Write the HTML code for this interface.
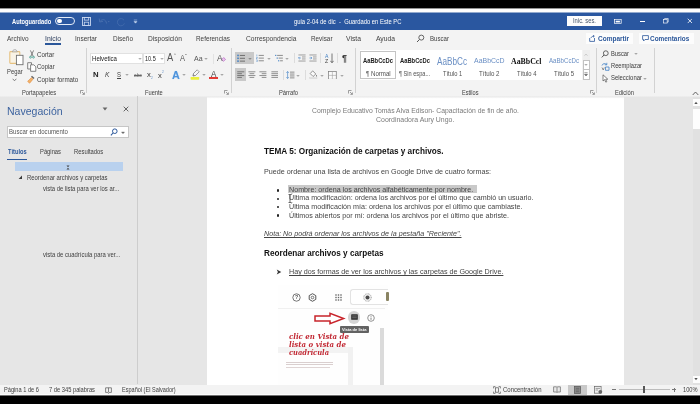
<!DOCTYPE html>
<html lang="es"><head><meta charset="utf-8"><title>guia 2-04 de dic - Word</title>
<style>
html,body{margin:0;padding:0;background:#000;}
#root{position:relative;width:700px;height:404px;overflow:hidden;background:#e6e6e6;font-family:"Liberation Sans",sans-serif;}
#root div,#root svg{position:absolute;}
.t{position:absolute;white-space:pre;transform-origin:0 50%;}
.sep{width:1px;background:#d2d2d2;}
.t{filter:blur(.3px);}
#root svg{filter:blur(.25px);}

</style></head>
<body>
<div id="root">
<!-- top black + white strip + title bar -->
<div style="left:0;top:0;width:700px;height:30px;background:linear-gradient(to bottom,#000 0,#000 7.8px,#fdfdfd 9px,#fdfdfd 11.8px,#2a57a0 13.2px,#2a57a0 30px)"></div>
<!-- autosave toggle -->
<div style="left:55.3px;top:16.9px;width:17.4px;height:6.6px;border:.9px solid #e4ecf8;border-radius:5px"></div>
<div style="left:57.4px;top:19px;width:4.2px;height:4.2px;border-radius:50%;background:#fff"></div>
<!-- save / undo / redo icons -->
<svg style="left:81.5px;top:17.2px" width="9" height="9" viewBox="0 0 9 9"><rect x=".5" y=".5" width="8" height="8" fill="none" stroke="#c9d8f0" stroke-width=".9"/><rect x="2.3" y=".5" width="4.4" height="2.6" fill="none" stroke="#c9d8f0" stroke-width=".8"/><rect x="2.3" y="5.2" width="4.4" height="3.3" fill="none" stroke="#c9d8f0" stroke-width=".8"/></svg>
<svg style="left:97.5px;top:17px" width="12" height="9" viewBox="0 0 12 9"><path d="M2 4.5 C4 1.5 8 2 8.5 6.5 M1.2 1.5 L1.7 5 L5 4.3 M10 4.6 H11.4" fill="none" stroke="#476eae" stroke-width="1"/></svg>
<svg style="left:116px;top:16.8px" width="10" height="10" viewBox="0 0 10 10"><path d="M8 3.2 A3.6 3.6 0 1 0 8.4 6.4" fill="none" stroke="#416aab" stroke-width="1"/></svg>
<svg style="left:132.5px;top:18.5px" width="5" height="5" viewBox="0 0 5 5"><path d="M.8 1 H4.2 M1 2.6 L2.5 4.2 L4 2.6Z" fill="#c9d8f0" stroke="#c9d8f0" stroke-width=".5"/></svg>
<!-- Inic ses button -->
<div style="left:567.4px;top:16.4px;width:34.2px;height:9.2px;background:#fdfdfd"></div>
<!-- window controls -->
<svg style="left:614.3px;top:18.6px" width="7.6" height="5" viewBox="0 0 9 7" preserveAspectRatio="none"><rect x=".5" y=".5" width="8" height="6" fill="none" stroke="#fff" stroke-width=".9"/><rect x="2" y="2.4" width="5" height="2.4" fill="#fff"/></svg>
<div style="left:639.5px;top:20.8px;width:5.4px;height:.9px;background:#fff"></div>
<svg style="left:662.8px;top:18.3px" width="5.8" height="5.6" viewBox="0 0 8 8"><rect x=".6" y="2" width="5.2" height="5.2" fill="none" stroke="#fff" stroke-width=".9"/><path d="M2.2 2 V.7 H7.3 V5.8 H5.8" fill="none" stroke="#fff" stroke-width=".9"/></svg>
<svg style="left:686.5px;top:18.3px" width="5.8" height="5.8" viewBox="0 0 8 8"><path d="M1 1 L7 7 M7 1 L1 7" stroke="#fff" stroke-width="1.1"/></svg>

<!-- tab row + ribbon -->
<div style="left:0;top:30px;width:700px;height:67.2px;background:linear-gradient(to bottom,#f3f3f3 0,#f3f3f3 65.8px,#e6e6e6 67.2px)"></div>
<div style="left:44.5px;top:43.4px;width:16px;height:1.3px;background:#2b579a"></div>
<svg style="left:415.5px;top:34px" width="9" height="9" viewBox="0 0 9 9"><circle cx="5.3" cy="3.6" r="2.5" fill="none" stroke="#555" stroke-width=".9"/><path d="M3.5 5.5 L1 8" stroke="#555" stroke-width="1"/></svg>
<!-- share / comments -->
<div style="left:586px;top:33px;width:47px;height:10.6px;background:#fcfcfc"></div>
<div style="left:639px;top:33px;width:55px;height:10.6px;background:#fcfcfc"></div>
<svg style="left:588.5px;top:34.5px" width="7" height="7" viewBox="0 0 7 7"><path d="M.7 3 V6.4 H5.5 V3 M2 2.8 C2.5 1.5 3.8 1.2 5 1.2 M4 .3 L5.3 1.2 L4 2.3" fill="none" stroke="#2b579a" stroke-width=".8"/></svg>
<svg style="left:642px;top:35px" width="7" height="7" viewBox="0 0 7 7"><path d="M.6 .6 H6.4 V4.5 H3 L1.6 6 V4.5 H.6Z" fill="none" stroke="#2b579a" stroke-width=".8"/></svg>

<!-- group separators -->
<div class="sep" style="left:86px;top:48px;height:45px"></div>
<div class="sep" style="left:231px;top:48px;height:45px"></div>
<div class="sep" style="left:354.5px;top:48px;height:45px"></div>
<div class="sep" style="left:596px;top:48px;height:45px"></div>
<div class="sep" style="left:654px;top:48px;height:45px"></div>

<!-- clipboard icons -->
<svg style="left:8.5px;top:49.3px" width="16" height="18" viewBox="0 0 16 18"><rect x=".8" y="2.6" width="10" height="11.8" rx=".8" fill="#f9f3e6" stroke="#e6c180" stroke-width="1.1"/><path d="M3.3 2.8 L4.6 .8 H7 L8.3 2.8Z" fill="#f7f7f7" stroke="#999" stroke-width=".7"/><rect x="7.4" y="6.3" width="6.6" height="9.4" fill="#fff" stroke="#707070" stroke-width=".9"/></svg>
<svg style="left:12px;top:78px" width="5" height="4" viewBox="0 0 5 4"><path d="M.7 .8 L2.5 2.8 L4.3 .8" fill="none" stroke="#666" stroke-width=".8"/></svg>
<svg style="left:27.8px;top:49.8px" width="8" height="9" viewBox="0 0 8 9"><path d="M2.4 .4 L5.2 6.4 M5.6 .4 L2.8 6.4" stroke="#666" stroke-width=".8" fill="none"/><circle cx="2.5" cy="7.2" r=".9" fill="none" stroke="#3b9c8a" stroke-width=".8"/><circle cx="5.5" cy="7.2" r=".9" fill="none" stroke="#3b9c8a" stroke-width=".8"/></svg>
<svg style="left:26.5px;top:62px" width="10" height="10" viewBox="0 0 10 10"><path d="M.7 .7 H4.5 V7 H.7Z" fill="#fafafa" stroke="#666" stroke-width=".8"/><path d="M3.6 2.8 H6.8 L8.8 4.8 V9.3 H3.6Z" fill="#fff" stroke="#666" stroke-width=".8"/></svg>
<svg style="left:27px;top:74.5px" width="9" height="10" viewBox="0 0 9 10"><path d="M5 .8 L7.5 3 L6.5 4 L4 1.8Z" fill="#666"/><path d="M4.3 2.7 L6 4.2 L2.6 8.2 L.6 6.4Z" fill="#f2b36a" stroke="#e08a3c" stroke-width=".6"/></svg>
<svg style="left:79.5px;top:89.8px" width="5" height="5" viewBox="0 0 5 5"><path d="M.5 3.5 V.5 H3.5" fill="none" stroke="#777" stroke-width=".7"/><path d="M2 2 L4.3 4.3 M4.4 2.4 V4.4 H2.4" fill="none" stroke="#777" stroke-width=".7"/></svg>
<!-- FONT group -->
<div style="left:90.8px;top:53.5px;width:51.6px;height:9.9px;background:#fff;outline:.5px solid #e1e1e1"></div>
<div style="left:144px;top:53.5px;width:20.3px;height:9.9px;background:#fff;outline:.5px solid #e1e1e1"></div>
<svg style="left:137.5px;top:57px" width="4" height="4" viewBox="0 0 4 4"><path d="M.8 1 L2 2.3 L3.2 1" fill="none" stroke="#666" stroke-width=".7"/></svg>
<svg style="left:159.5px;top:57px" width="4" height="4" viewBox="0 0 4 4"><path d="M.8 1 L2 2.3 L3.2 1" fill="none" stroke="#666" stroke-width=".7"/></svg>
<svg style="left:203.8px;top:56.6px" width="4" height="4" viewBox="0 0 4 4"><path d="M.8 1 L2 2.3 L3.2 1" fill="none" stroke="#666" stroke-width=".7"/></svg>
<div class="sep" style="left:213.3px;top:54px;height:10px;background:#e2e2e2"></div>
<!-- clear formatting eraser -->
<svg style="left:220.6px;top:57.4px" width="5" height="5" viewBox="0 0 6 6"><path d="M3.2 .6 L5.4 2.8 L3 5.2 L.8 3Z" fill="#e8c7ec" stroke="#b04cc0" stroke-width=".7"/></svg>
<!-- row2 arrows -->
<svg style="left:125.2px;top:72.8px" width="4" height="4" viewBox="0 0 4 4"><path d="M.8 1 L2 2.3 L3.2 1" fill="none" stroke="#666" stroke-width=".7"/></svg>
<svg style="left:182px;top:72.8px" width="4" height="4" viewBox="0 0 4 4"><path d="M.8 1 L2 2.3 L3.2 1" fill="none" stroke="#666" stroke-width=".7"/></svg>
<svg style="left:201.5px;top:72.8px" width="4" height="4" viewBox="0 0 4 4"><path d="M.8 1 L2 2.3 L3.2 1" fill="none" stroke="#666" stroke-width=".7"/></svg>
<svg style="left:220px;top:72.8px" width="4" height="4" viewBox="0 0 4 4"><path d="M.8 1 L2 2.3 L3.2 1" fill="none" stroke="#666" stroke-width=".7"/></svg>
<!-- highlighter pen -->
<svg style="left:190px;top:68.6px" width="11" height="11" viewBox="0 0 11 11"><path d="M7.2 .8 L9.2 2.8 L5 7 L3 5Z" fill="#f6f6f6" stroke="#777" stroke-width=".7"/><path d="M3 5 L5 7 L3.4 7.6 L2.4 6.6Z" fill="#888"/><rect x=".6" y="8" width="8.6" height="2.7" rx=".6" fill="#eaf03c"/></svg>
<!-- font colour bar -->
<div style="left:209.2px;top:76.8px;width:8.6px;height:2.2px;background:#e23a35"></div>
<svg style="left:224.3px;top:89.8px" width="5" height="5" viewBox="0 0 5 5"><path d="M.5 3.5 V.5 H3.5" fill="none" stroke="#777" stroke-width=".7"/><path d="M2 2 L4.3 4.3 M4.4 2.4 V4.4 H2.4" fill="none" stroke="#777" stroke-width=".7"/></svg>

<!-- PARAGRAPH group -->
<div style="left:235px;top:51.6px;width:18.6px;height:12.4px;background:#c9c9c9"></div>
<div style="left:235px;top:68.3px;width:11.4px;height:12.3px;background:#c9c9c9"></div>
<!-- bullets icon -->
<svg style="left:236.5px;top:53.6px" width="8.6" height="8.6" viewBox="0 0 10 10"><g fill="#3f7fc4"><rect x=".3" y=".8" width="1.8" height="1.8"/><rect x=".3" y="4.1" width="1.8" height="1.8"/><rect x=".3" y="7.4" width="1.8" height="1.8"/></g><path d="M3.3 1.7 H9.6 M3.3 5 H9.6 M3.3 8.3 H9.6" stroke="#555" stroke-width=".9"/></svg>
<svg style="left:247.5px;top:56.5px" width="4" height="4" viewBox="0 0 4 4"><path d="M.8 1 L2 2.3 L3.2 1" fill="none" stroke="#555" stroke-width=".7"/></svg>
<!-- numbering icon -->
<svg style="left:255.8px;top:53.8px" width="8.2" height="8.2" viewBox="0 0 10 10"><path d="M1 .6 V2.8 M.4 4 H1.6 V5 H.4 V6 H1.6 M.4 7.3 H1.6 V9.4 H.4" stroke="#3f7fc4" stroke-width=".6" fill="none"/><path d="M3.3 1.7 H9.6 M3.3 5 H9.6 M3.3 8.3 H9.6" stroke="#666" stroke-width=".9"/></svg>
<svg style="left:266.5px;top:56.5px" width="4" height="4" viewBox="0 0 4 4"><path d="M.8 1 L2 2.3 L3.2 1" fill="none" stroke="#666" stroke-width=".7"/></svg>
<!-- multilevel -->
<svg style="left:274.8px;top:53.8px" width="8.2" height="8.2" viewBox="0 0 10 10"><g fill="#3f7fc4"><rect x=".2" y="1" width="1.4" height="1.4"/><rect x="2" y="4.3" width="1.4" height="1.4"/><rect x="3.8" y="7.6" width="1.4" height="1.4"/></g><path d="M2.6 1.7 H9.6 M4.4 5 H9.6 M6.2 8.3 H9.6" stroke="#666" stroke-width=".9"/></svg>
<svg style="left:284.5px;top:56.5px" width="4" height="4" viewBox="0 0 4 4"><path d="M.8 1 L2 2.3 L3.2 1" fill="none" stroke="#666" stroke-width=".7"/></svg>
<div class="sep" style="left:293.5px;top:53px;height:10px;background:#dcdcdc"></div>
<!-- indents -->
<svg style="left:297.6px;top:54px" width="8" height="8" viewBox="0 0 10 10"><path d="M.5 1.2 H9.5 M5 3.7 H9.5 M5 6.2 H9.5 M.5 8.8 H9.5" stroke="#666" stroke-width=".75"/><path d="M3.6 5 H.8 M2 3.6 L.6 5 L2 6.4" stroke="#3f7fc4" stroke-width=".8" fill="none"/></svg>
<svg style="left:308.8px;top:54px" width="8" height="8" viewBox="0 0 10 10"><path d="M.5 1.2 H9.5 M5 3.7 H9.5 M5 6.2 H9.5 M.5 8.8 H9.5" stroke="#666" stroke-width=".75"/><path d="M.6 5 H3.4 M2.2 3.6 L3.6 5 L2.2 6.4" stroke="#3f7fc4" stroke-width=".8" fill="none"/></svg>
<div class="sep" style="left:320px;top:53px;height:10px;background:#dcdcdc"></div>
<!-- sort arrow -->
<svg style="left:329.6px;top:53px" width="4" height="11" viewBox="0 0 4 11"><path d="M2 .5 V9.5 M.4 7.8 L2 9.8 L3.6 7.8" stroke="#555" stroke-width=".8" fill="none"/></svg>
<div class="sep" style="left:337px;top:53px;height:10px;background:#dcdcdc"></div>
<!-- alignment -->
<svg style="left:237px;top:70.8px" width="7.8" height="7.4" viewBox="0 0 10 9"><path d="M.3 .8 H9.3 M.3 3.2 H6.3 M.3 5.6 H9.3 M.3 8 H6.3" stroke="#555" stroke-width=".9"/></svg>
<svg style="left:248.2px;top:70.8px" width="7.8" height="7.4" viewBox="0 0 10 9"><path d="M.5 .8 H9.5 M2 3.2 H8 M.5 5.6 H9.5 M2 8 H8" stroke="#666" stroke-width=".9"/></svg>
<svg style="left:259.3px;top:70.8px" width="7.8" height="7.4" viewBox="0 0 10 9"><path d="M.5 .8 H9.5 M3.5 3.2 H9.5 M.5 5.6 H9.5 M3.5 8 H9.5" stroke="#666" stroke-width=".9"/></svg>
<svg style="left:270.7px;top:70.8px" width="7.8" height="7.4" viewBox="0 0 10 9"><path d="M.5 .8 H9.5 M.5 3.2 H9.5 M.5 5.6 H9.5 M.5 8 H9.5" stroke="#666" stroke-width=".9"/></svg>
<div class="sep" style="left:283.4px;top:70px;height:10px;background:#dcdcdc"></div>
<!-- line spacing -->
<svg style="left:286.4px;top:70.5px" width="8.8" height="8" viewBox="0 0 11 10"><path d="M2 .8 V9.2 M.5 2.3 L2 .6 L3.5 2.3 M.5 7.7 L2 9.4 L3.5 7.7" stroke="#3f7fc4" stroke-width=".8" fill="none"/><path d="M5 1.4 H10.6 M5 3.8 H10.6 M5 6.2 H10.6 M5 8.6 H10.6" stroke="#666" stroke-width=".9"/></svg>
<svg style="left:296.4px;top:73.5px" width="4" height="4" viewBox="0 0 4 4"><path d="M.8 1 L2 2.3 L3.2 1" fill="none" stroke="#666" stroke-width=".7"/></svg>
<div class="sep" style="left:304.8px;top:70px;height:10px;background:#dcdcdc"></div>
<!-- shading bucket -->
<svg style="left:309px;top:70px" width="9.4" height="9.4" viewBox="0 0 11 11"><path d="M4.3 1 L8 4.7 L4.8 7.6 L1.4 4.2Z" fill="#fbfbfb" stroke="#666" stroke-width=".8"/><path d="M8.8 5.6 C9.6 6.8 9.8 7.4 8.9 7.8 C8 7.5 8.2 6.6 8.8 5.6Z" fill="#666"/><rect x=".8" y="8.8" width="8.6" height="1.9" fill="#dedede" stroke="#c9c9c9" stroke-width=".3"/></svg>
<svg style="left:320.3px;top:73.5px" width="4" height="4" viewBox="0 0 4 4"><path d="M.8 1 L2 2.3 L3.2 1" fill="none" stroke="#666" stroke-width=".7"/></svg>
<!-- borders -->
<svg style="left:328.2px;top:70.6px" width="8.8" height="8.8" viewBox="0 0 10 10"><rect x=".6" y=".6" width="8.8" height="8.8" fill="#fafafa" stroke="#777" stroke-width=".8"/><path d="M5 .6 V9.4 M.6 5 H9.4" stroke="#999" stroke-width=".6"/></svg>
<svg style="left:339.5px;top:73.5px" width="4" height="4" viewBox="0 0 4 4"><path d="M.8 1 L2 2.3 L3.2 1" fill="none" stroke="#666" stroke-width=".7"/></svg>
<svg style="left:348px;top:89.8px" width="5" height="5" viewBox="0 0 5 5"><path d="M.5 3.5 V.5 H3.5" fill="none" stroke="#777" stroke-width=".7"/><path d="M2 2 L4.3 4.3 M4.4 2.4 V4.4 H2.4" fill="none" stroke="#777" stroke-width=".7"/></svg>

<!-- STYLES gallery -->
<div style="left:359.6px;top:50px;width:222.2px;height:29.6px;background:#fff"></div>
<div style="left:359.8px;top:50.6px;width:36px;height:28.6px;border:1px solid #c4c4c4;box-sizing:border-box"></div>
<div style="left:582.8px;top:50px;width:6.8px;height:9.6px;background:#eeeeee"></div><div style="left:582.8px;top:60.4px;width:6.8px;height:19.2px;background:#fff;box-sizing:border-box;border:.6px solid #c2c2c2"></div>
<div style="left:582.8px;top:69.4px;width:6.8px;height:.8px;background:#c2c2c2"></div>
<svg style="left:584.2px;top:53.2px" width="4" height="4" viewBox="0 0 4 4"><path d="M.5 2.7 L2 1 L3.5 2.7" fill="none" stroke="#bbb" stroke-width=".7"/></svg>
<svg style="left:584.2px;top:63px" width="4" height="4" viewBox="0 0 4 4"><path d="M.8 1 L2 2.3 L3.2 1" fill="none" stroke="#666" stroke-width=".7"/></svg>
<svg style="left:584.2px;top:72.4px" width="4" height="5" viewBox="0 0 4 5"><path d="M.4 .7 H3.6 M.5 2.3 L2 4 L3.5 2.3Z" fill="#666" stroke="#666" stroke-width=".6"/></svg>
<svg style="left:589.5px;top:89.8px" width="5" height="5" viewBox="0 0 5 5"><path d="M.5 3.5 V.5 H3.5" fill="none" stroke="#777" stroke-width=".7"/><path d="M2 2 L4.3 4.3 M4.4 2.4 V4.4 H2.4" fill="none" stroke="#777" stroke-width=".7"/></svg>

<!-- EDIT group icons -->
<svg style="left:601px;top:50.3px" width="8" height="8" viewBox="0 0 8 8"><circle cx="4.8" cy="3.2" r="2.4" fill="none" stroke="#555" stroke-width=".9"/><path d="M3 5 L.8 7.4" stroke="#555" stroke-width="1"/></svg>
<svg style="left:633.5px;top:52.4px" width="4" height="4" viewBox="0 0 4 4"><path d="M.8 1 L2 2.3 L3.2 1" fill="none" stroke="#666" stroke-width=".7"/></svg>
<svg style="left:601px;top:62px" width="9" height="9" viewBox="0 0 9 9"><path d="M1 3.5 C1.5 1.5 4 1 5.5 2.5 M5.8 .8 V2.8 H3.8" fill="none" stroke="#3f7fc4" stroke-width=".8"/><path d="M4.5 5 H8 V8.3 H4.5Z" fill="none" stroke="#3f7fc4" stroke-width=".8"/><path d="M1 5.5 L2.2 8 L3.3 5.5" fill="none" stroke="#666" stroke-width=".7"/></svg>
<svg style="left:602px;top:74px" width="7" height="9" viewBox="0 0 7 9"><path d="M1 .8 V7 L2.6 5.6 L3.8 8.2 L4.8 7.7 L3.7 5.2 H5.8Z" fill="#fff" stroke="#555" stroke-width=".7"/></svg>
<svg style="left:643px;top:76.5px" width="4" height="4" viewBox="0 0 4 4"><path d="M.8 1 L2 2.3 L3.2 1" fill="none" stroke="#666" stroke-width=".7"/></svg>
<svg style="left:691.5px;top:91px" width="7" height="5" viewBox="0 0 7 5"><path d="M.7 4 L3.5 1 L6.3 4" fill="none" stroke="#555" stroke-width=".9"/></svg>

<!-- NAV PANE -->
<div style="left:137.3px;top:96.4px;width:.8px;height:288px;background:#cdcdcd"></div>
<svg style="left:102px;top:106.6px" width="6" height="4" viewBox="0 0 6 4"><path d="M.6 .6 H5.4 L3 3.4Z" fill="#666"/></svg>
<svg style="left:123px;top:105.6px" width="6" height="6" viewBox="0 0 6 6"><path d="M.7 .7 L5.3 5.3 M5.3 .7 L.7 5.3" stroke="#555" stroke-width=".9"/></svg>
<div style="left:7.4px;top:126px;width:121.6px;height:11.5px;background:#fff;box-sizing:border-box;border:.7px solid #c6c6c6"></div>
<svg style="left:110px;top:128px" width="8" height="8" viewBox="0 0 8 8"><circle cx="4.8" cy="3.2" r="2.3" fill="none" stroke="#2b579a" stroke-width="1"/><path d="M3 5 L.9 7.3" stroke="#2b579a" stroke-width="1.1"/></svg>
<svg style="left:121px;top:130.5px" width="4" height="4" viewBox="0 0 4 4"><path d="M.5 1 L2 2.7 L3.5 1Z" fill="#666" stroke="#666" stroke-width=".4"/></svg>
<div style="left:7.4px;top:158.6px;width:19.6px;height:1.4px;background:#2b579a"></div>
<div style="left:14.5px;top:162.4px;width:108.5px;height:8.9px;background:#b9d1ee"></div>
<svg style="left:66px;top:164.5px" width="4" height="5" viewBox="0 0 4 5"><path d="M.5 .5 H3.5 L2 2.3Z M.5 4.5 H3.5 L2 2.7Z" fill="#444"/></svg>
<svg style="left:17.8px;top:174.6px" width="4.6" height="4.6" viewBox="0 0 4 4"><path d="M3.5 .5 V3.5 H.5Z" fill="#3a3a3a"/></svg>
<!-- DOCUMENT PAGE -->
<div style="left:206.6px;top:96.8px;width:417.6px;height:288px;background:linear-gradient(to bottom,#ededed 0,#fff 1.6px)"></div>
<!-- highlight on bullet 1 -->
<div style="left:288.4px;top:185.2px;width:188.6px;height:7.7px;background:#c9c9c9"></div>
<!-- bullets -->
<div style="left:277.2px;top:189.4px;width:2.6px;height:2.6px;margin:-.3px;border-radius:50%;background:#222"></div>
<div style="left:277.2px;top:197.8px;width:2.6px;height:2.6px;margin:-.3px;border-radius:50%;background:#222"></div>
<div style="left:277.2px;top:206.2px;width:2.6px;height:2.6px;margin:-.3px;border-radius:50%;background:#222"></div>
<div style="left:277.2px;top:214.6px;width:2.6px;height:2.6px;margin:-.3px;border-radius:50%;background:#222"></div>
<!-- I-beam cursor -->
<svg style="left:287.5px;top:193.5px" width="4" height="9" viewBox="0 0 4 9"><path d="M.5 .5 H3.5 M2 .5 V8.5 M.5 8.5 H3.5" stroke="#333" stroke-width=".7" fill="none"/></svg>
<!-- arrow bullet -->
<svg style="left:275.8px;top:268.8px" width="6" height="6" viewBox="0 0 5 5"><path d="M.6 .5 L4.4 2.5 L.6 4.5 L1.6 2.5Z" fill="#333"/></svg>

<!-- embedded picture -->
<div style="left:278px;top:285px;width:112px;height:99.5px;background:#fefefe"></div>
<div style="left:278px;top:308.2px;width:107px;height:.8px;background:#f0f0f0"></div>
<svg style="left:291.6px;top:292.5px" width="9" height="9" viewBox="0 0 9 9"><circle cx="4.5" cy="4.5" r="3.7" fill="none" stroke="#555" stroke-width=".8"/></svg>
<svg style="left:307.7px;top:292.5px" width="9" height="9" viewBox="0 0 9 9"><path d="M4.5 .7 L7.8 2.6 V6.4 L4.5 8.3 L1.2 6.4 V2.6Z" fill="none" stroke="#555" stroke-width="1"/><circle cx="4.5" cy="4.5" r="1.3" fill="none" stroke="#555" stroke-width=".8"/></svg>
<svg style="left:334.5px;top:293.5px" width="7" height="7" viewBox="0 0 7 7"><g fill="#666"><rect x=".3" y=".3" width="1.4" height="1.4"/><rect x="2.8" y=".3" width="1.4" height="1.4"/><rect x="5.3" y=".3" width="1.4" height="1.4"/><rect x=".3" y="2.8" width="1.4" height="1.4"/><rect x="2.8" y="2.8" width="1.4" height="1.4"/><rect x="5.3" y="2.8" width="1.4" height="1.4"/><rect x=".3" y="5.3" width="1.4" height="1.4"/><rect x="2.8" y="5.3" width="1.4" height="1.4"/><rect x="5.3" y="5.3" width="1.4" height="1.4"/></g></svg>
<div style="left:350.4px;top:289.2px;width:45px;height:15.8px;border:.8px solid #e3e3e3;border-right:0;border-radius:3px 0 0 3px;box-sizing:border-box;background:#fff"></div>
<div style="left:388px;top:285px;width:8px;height:25px;background:#fff"></div>
<svg style="left:363px;top:293px" width="9" height="9" viewBox="0 0 9 9"><circle cx="4.5" cy="4.5" r="3.8" fill="#efefef" stroke="#777" stroke-width=".7" stroke-dasharray=".8 .7"/><circle cx="4.5" cy="4.4" r="2" fill="#4a4a4a"/></svg>
<div style="left:385.5px;top:292px;width:3px;height:9px;background:#8a8463;border-radius:1px"></div>
<!-- red outlined arrow -->
<svg style="left:314px;top:311.7px" width="34" height="13" viewBox="0 0 34 13"><path d="M1 3.9 H16 V1.4 L29.6 6.5 L16 11.6 V9.1 H1Z" fill="#fff" stroke="#c8242b" stroke-width="1.5" stroke-linejoin="miter"/></svg>
<!-- list view button -->
<div style="left:347.8px;top:311px;width:12.6px;height:12.6px;border-radius:50%;background:#d4d4d4"></div>
<svg style="left:350.8px;top:314.3px" width="7" height="6" viewBox="0 0 7 6"><rect x=".2" y=".2" width="6.6" height="5.6" rx=".6" fill="#2c2c2c"/><path d="M1.2 2 H5.8 M1.2 3.8 H5.8" stroke="#bbb" stroke-width=".5"/></svg>
<svg style="left:367.3px;top:313.7px" width="8" height="8" viewBox="0 0 8 8"><circle cx="4" cy="4" r="3.3" fill="none" stroke="#666" stroke-width=".7"/><path d="M4 3.6 V5.8 M4 2.2 V2.9" stroke="#666" stroke-width=".8"/></svg>
<!-- tooltip -->
<div style="left:339.8px;top:325.6px;width:29px;height:7.3px;background:#626262;border-radius:1px"></div>
<!-- faint shapes -->
<div style="left:380.3px;top:327.7px;width:4.2px;height:57px;background:#dadada"></div>
<div style="left:278px;top:346.5px;width:74px;height:6px;background:#f3f3f3"></div>
<div style="left:347.6px;top:347px;width:5.5px;height:37.5px;background:#f1f1f1"></div>
<div style="left:285.5px;top:361.8px;width:47px;height:1.1px;background:#dacfcf"></div>
<div style="left:285.5px;top:364.2px;width:47px;height:1.1px;background:#dacfcf"></div>
<div style="left:285.5px;top:366.6px;width:44px;height:1.1px;background:#dfd4d4"></div>

<!-- vertical scrollbar -->
<div style="left:692.5px;top:96.8px;width:7.5px;height:288px;background:#e1e1e1"></div>
<div style="left:692.8px;top:99px;width:7.2px;height:7px;background:#fdfdfd"></div>
<div style="left:692.8px;top:108.7px;width:7.2px;height:20.8px;background:#fdfdfd"></div>
<div style="left:692.8px;top:375.5px;width:7.2px;height:7px;background:#fdfdfd"></div>
<svg style="left:694px;top:100.5px" width="4" height="4" viewBox="0 0 4 4"><path d="M.3 3 L2 .8 L3.7 3Z" fill="#555"/></svg>
<svg style="left:693.5px;top:377px" width="4" height="4" viewBox="0 0 4 4"><path d="M.3 1 L2 3.2 L3.7 1Z" fill="#555"/></svg>

<!-- STATUS BAR -->
<div style="left:0;top:384.6px;width:700px;height:10.6px;background:#f3f3f3"></div>
<div style="left:0;top:394px;width:700px;height:10px;background:linear-gradient(to bottom,#fcfcfc 0,#fcfcfc 1px,#000 1.9px,#000 10px)"></div>
<svg style="left:104.5px;top:386.5px" width="7" height="7" viewBox="0 0 7 7"><path d="M.6 .8 H6.4 V5.4 H4.3 L3.5 6.4 L2.7 5.4 H.6Z M3.5 .8 V5.2" fill="none" stroke="#555" stroke-width=".7"/></svg>
<svg style="left:493px;top:386px" width="8" height="8" viewBox="0 0 8 8"><path d="M.6 2.4 V.6 H2.4 M5.6 .6 H7.4 V2.4 M7.4 5.6 V7.4 H5.6 M2.4 7.4 H.6 V5.6" fill="none" stroke="#555" stroke-width=".7"/><rect x="2.4" y="1.8" width="3.2" height="4.4" fill="none" stroke="#555" stroke-width=".7"/></svg>
<svg style="left:552.5px;top:386.3px" width="8" height="7" viewBox="0 0 8 7"><path d="M.6 .8 H3.6 L4 1.3 L4.4 .8 H7.4 V6 H4.4 L4 6.5 L3.6 6 H.6Z M4 1.3 V6.3" fill="#e9e9e9" stroke="#666" stroke-width=".7"/></svg>
<div style="left:568px;top:384.6px;width:19px;height:10.6px;background:#c9c9c9"></div>
<svg style="left:574.2px;top:386px" width="7" height="8" viewBox="0 0 7 8"><rect x=".5" y=".5" width="6" height="7" fill="#8a8a8a" stroke="#555" stroke-width=".7"/><path d="M1.8 2.3 H5.2 M1.8 4 H5.2 M1.8 5.7 H5.2" stroke="#555" stroke-width=".6"/></svg>
<svg style="left:594px;top:386px" width="9" height="8" viewBox="0 0 9 8"><rect x=".5" y=".6" width="6.6" height="6.6" fill="#eee" stroke="#666" stroke-width=".7"/><path d="M1.6 2.4 H6 M1.6 4 H4" stroke="#666" stroke-width=".6"/><circle cx="6.3" cy="5.8" r="1.9" fill="#666"/></svg>
<div style="left:611.5px;top:389.3px;width:4px;height:.8px;background:#777"></div>
<div style="left:619px;top:389.4px;width:51px;height:.7px;background:#bcbcbc"></div>
<div style="left:643px;top:386.2px;width:2px;height:7.2px;background:#555"></div>
<div style="left:672px;top:389.3px;width:4.4px;height:.8px;background:#777"></div>
<div style="left:673.8px;top:387.5px;width:.8px;height:4.4px;background:#777"></div>

<span id="t0" class="t" style="left:11.8px;top:17.50px;font:7px/8.4px 'Liberation Sans', sans-serif;color:#fff;font-weight:bold;transform:scaleX(0.8196)">Autoguardado</span>
<span id="t1" class="t" style="left:294px;top:17.64px;font:6.6px/7.92px 'Liberation Sans', sans-serif;color:#fff;transform:scaleX(0.8887)">guia 2-04 de dic  -  Guardado en Este PC</span>
<span id="t2" class="t" style="left:573px;top:17.44px;font:6.6px/7.92px 'Liberation Sans', sans-serif;color:#44546a;transform:scaleX(0.8836)">Inic. ses.</span>
<span id="t3" class="t" style="left:7px;top:34.50px;font:7px/8.4px 'Liberation Sans', sans-serif;color:#404040;transform:scaleX(0.9210)">Archivo</span>
<span id="t4" class="t" style="left:44.5px;top:34.50px;font:7px/8.4px 'Liberation Sans', sans-serif;color:#2b3d5c;transform:scaleX(0.9790)">Inicio</span>
<span id="t5" class="t" style="left:75px;top:34.50px;font:7px/8.4px 'Liberation Sans', sans-serif;color:#404040;transform:scaleX(0.9269)">Insertar</span>
<span id="t6" class="t" style="left:112.5px;top:34.50px;font:7px/8.4px 'Liberation Sans', sans-serif;color:#404040;transform:scaleX(0.9176)">Diseño</span>
<span id="t7" class="t" style="left:147.5px;top:34.50px;font:7px/8.4px 'Liberation Sans', sans-serif;color:#404040;transform:scaleX(0.9498)">Disposición</span>
<span id="t8" class="t" style="left:196px;top:34.50px;font:7px/8.4px 'Liberation Sans', sans-serif;color:#404040;transform:scaleX(0.9101)">Referencias</span>
<span id="t9" class="t" style="left:245.5px;top:34.50px;font:7px/8.4px 'Liberation Sans', sans-serif;color:#404040;transform:scaleX(0.9472)">Correspondencia</span>
<span id="t10" class="t" style="left:311px;top:34.50px;font:7px/8.4px 'Liberation Sans', sans-serif;color:#404040;transform:scaleX(0.9059)">Revisar</span>
<span id="t11" class="t" style="left:346px;top:34.50px;font:7px/8.4px 'Liberation Sans', sans-serif;color:#404040;transform:scaleX(0.9717)">Vista</span>
<span id="t12" class="t" style="left:376px;top:34.50px;font:7px/8.4px 'Liberation Sans', sans-serif;color:#404040;transform:scaleX(0.9628)">Ayuda</span>
<span id="t13" class="t" style="left:430px;top:34.50px;font:7px/8.4px 'Liberation Sans', sans-serif;color:#404040;transform:scaleX(0.8717)">Buscar</span>
<span id="t14" class="t" style="left:597.6px;top:34.50px;font:7px/8.4px 'Liberation Sans', sans-serif;color:#2b579a;font-weight:bold;transform:scaleX(0.9267)">Compartir</span>
<span id="t15" class="t" style="left:650.4px;top:34.50px;font:7px/8.4px 'Liberation Sans', sans-serif;color:#2b579a;font-weight:bold;transform:scaleX(0.9160)">Comentarios</span>
<span id="t16" class="t" style="left:7px;top:68.20px;font:7px/8.4px 'Liberation Sans', sans-serif;color:#404040;transform:scaleX(0.8348)">Pegar</span>
<span id="t17" class="t" style="left:37px;top:50.80px;font:7px/8.4px 'Liberation Sans', sans-serif;color:#404040;transform:scaleX(0.8893)">Cortar</span>
<span id="t18" class="t" style="left:37px;top:63.30px;font:7px/8.4px 'Liberation Sans', sans-serif;color:#404040;transform:scaleX(0.8582)">Copiar</span>
<span id="t19" class="t" style="left:37px;top:76.00px;font:7px/8.4px 'Liberation Sans', sans-serif;color:#404040;transform:scaleX(0.8921)">Copiar formato</span>
<span id="t20" class="t" style="left:21.6px;top:88.64px;font:6.6px/7.92px 'Liberation Sans', sans-serif;color:#404040;transform:scaleX(0.8775)">Portapapeles</span>
<span id="t21" class="t" style="left:92px;top:54.64px;font:6.6px/7.92px 'Liberation Sans', sans-serif;color:#222;transform:scaleX(0.9217)">Helvetica</span>
<span id="t22" class="t" style="left:145px;top:54.64px;font:6.6px/7.92px 'Liberation Sans', sans-serif;color:#222;transform:scaleX(0.8331)">10.5</span>
<span id="t23" class="t" style="left:145px;top:88.54px;font:6.6px/7.92px 'Liberation Sans', sans-serif;color:#404040;transform:scaleX(0.8670)">Fuente</span>
<span id="t24" class="t" style="left:278.8px;top:88.54px;font:6.6px/7.92px 'Liberation Sans', sans-serif;color:#404040;transform:scaleX(0.8786)">Párrafo</span>
<span id="t25" class="t" style="left:462px;top:88.54px;font:6.6px/7.92px 'Liberation Sans', sans-serif;color:#404040;transform:scaleX(0.8496)">Estilos</span>
<span id="t26" class="t" style="left:615px;top:88.54px;font:6.6px/7.92px 'Liberation Sans', sans-serif;color:#404040;transform:scaleX(0.8780)">Edición</span>
<span id="t27" class="t" style="left:611px;top:50.20px;font:7px/8.4px 'Liberation Sans', sans-serif;color:#3a3a3a;transform:scaleX(0.8258)">Buscar</span>
<span id="t28" class="t" style="left:611px;top:62.40px;font:7px/8.4px 'Liberation Sans', sans-serif;color:#3a3a3a;transform:scaleX(0.8212)">Reemplazar</span>
<span id="t29" class="t" style="left:611px;top:74.30px;font:7px/8.4px 'Liberation Sans', sans-serif;color:#3a3a3a;transform:scaleX(0.8475)">Seleccionar</span>
<span id="t30" class="t" style="left:362.9px;top:56.90px;font:7px/8.4px 'Liberation Sans', sans-serif;color:#222;font-weight:bold;transform:scaleX(0.8290)">AaBbCcDc</span>
<span id="t31" class="t" style="left:365.6px;top:69.64px;font:6.6px/7.92px 'Liberation Sans', sans-serif;color:#505050;transform:scaleX(0.9277)">¶ Normal</span>
<span id="t32" class="t" style="left:400px;top:56.90px;font:7px/8.4px 'Liberation Sans', sans-serif;color:#222;font-weight:bold;transform:scaleX(0.8290)">AaBbCcDc</span>
<span id="t33" class="t" style="left:399.3px;top:69.64px;font:6.6px/7.92px 'Liberation Sans', sans-serif;color:#505050;transform:scaleX(0.8513)">¶ Sin espa...</span>
<span id="t34" class="t" style="left:436.8px;top:54.70px;font:10.5px/12.6px 'Liberation Sans', sans-serif;color:#6a8fc4;transform:scaleX(0.7786)">AaBbCc</span>
<span id="t35" class="t" style="left:442.8px;top:69.64px;font:6.6px/7.92px 'Liberation Sans', sans-serif;color:#505050;transform:scaleX(0.8682)">Título 1</span>
<span id="t36" class="t" style="left:473.5px;top:56.30px;font:8px/9.6px 'Liberation Sans', sans-serif;color:#6a8fc4;transform:scaleX(0.8683)">AaBbCcD</span>
<span id="t37" class="t" style="left:479px;top:69.64px;font:6.6px/7.92px 'Liberation Sans', sans-serif;color:#505050;transform:scaleX(0.9318)">Título 2</span>
<span id="t38" class="t" style="left:511px;top:56.00px;font:8.5px/10.2px 'Liberation Serif', serif;color:#111;font-weight:bold;transform:scaleX(0.9225)">AaBbCcl</span>
<span id="t39" class="t" style="left:516.5px;top:69.64px;font:6.6px/7.92px 'Liberation Sans', sans-serif;color:#505050;transform:scaleX(0.8864)">Título 4</span>
<span id="t40" class="t" style="left:548.5px;top:56.90px;font:7px/8.4px 'Liberation Sans', sans-serif;color:#6a8fc4;transform:scaleX(0.8763)">AaBbCcDc</span>
<span id="t41" class="t" style="left:553.5px;top:69.64px;font:6.6px/7.92px 'Liberation Sans', sans-serif;color:#505050;transform:scaleX(0.9091)">Título 5</span>
<span id="t42" class="t" style="left:7.4px;top:105.38px;font:11.2px/13.44px 'Liberation Sans', sans-serif;color:#3d639f;transform:scaleX(0.9409)">Navegación</span>
<span id="t43" class="t" style="left:9px;top:127.94px;font:6.6px/7.92px 'Liberation Sans', sans-serif;color:#555;transform:scaleX(0.9165)">Buscar en documento</span>
<span id="t44" class="t" style="left:8px;top:148.12px;font:6.8px/8.16px 'Liberation Sans', sans-serif;color:#2b579a;font-weight:bold;transform:scaleX(0.8393)">Títulos</span>
<span id="t45" class="t" style="left:39.6px;top:148.12px;font:6.8px/8.16px 'Liberation Sans', sans-serif;color:#404040;transform:scaleX(0.8550)">Páginas</span>
<span id="t46" class="t" style="left:73.7px;top:148.12px;font:6.8px/8.16px 'Liberation Sans', sans-serif;color:#404040;transform:scaleX(0.8614)">Resultados</span>
<span id="t47" class="t" style="left:26.5px;top:173.74px;font:6.6px/7.92px 'Liberation Sans', sans-serif;color:#404040;transform:scaleX(0.8954)">Reordenar archivos y carpetas</span>
<span id="t48" class="t" style="left:42.5px;top:185.04px;font:6.6px/7.92px 'Liberation Sans', sans-serif;color:#404040;transform:scaleX(0.8924)">vista de lista para ver los ar...</span>
<span id="t49" class="t" style="left:42.7px;top:251.14px;font:6.6px/7.92px 'Liberation Sans', sans-serif;color:#404040;transform:scaleX(0.8974)">vista de cuadrícula para ver...</span>
<span id="t50" class="t" style="left:4px;top:385.86px;font:6.4px/7.68px 'Liberation Sans', sans-serif;color:#404040;transform:scaleX(0.8871)">Página 1 de 6</span>
<span id="t51" class="t" style="left:49px;top:385.86px;font:6.4px/7.68px 'Liberation Sans', sans-serif;color:#404040;transform:scaleX(0.8989)">7 de 345 palabras</span>
<span id="t52" class="t" style="left:122px;top:385.86px;font:6.4px/7.68px 'Liberation Sans', sans-serif;color:#404040;transform:scaleX(0.8688)">Español (El Salvador)</span>
<span id="t53" class="t" style="left:502.5px;top:385.86px;font:6.4px/7.68px 'Liberation Sans', sans-serif;color:#404040;transform:scaleX(0.9340)">Concentración</span>
<span id="t54" class="t" style="left:682.5px;top:385.86px;font:6.4px/7.68px 'Liberation Sans', sans-serif;color:#404040;transform:scaleX(0.8863)">100%</span>
<span id="t55" class="t" style="left:312px;top:106.70px;font:7px/8.4px 'Liberation Sans', sans-serif;color:#7a7a7a;transform:scaleX(0.9749)">Complejo Educativo Tomás Alva Edison- Capacitación de fin de año.</span>
<span id="t56" class="t" style="left:375.6px;top:115.70px;font:7px/8.4px 'Liberation Sans', sans-serif;color:#7a7a7a;transform:scaleX(0.9924)">Coordinadora Aury Ungo.</span>
<span id="t57" class="t" style="left:264px;top:146.24px;font:8.6px/10.32px 'Liberation Sans', sans-serif;color:#111;font-weight:bold;transform:scaleX(0.9537)">TEMA 5: Organización de carpetas y archivos.</span>
<span id="t58" class="t" style="left:264px;top:166.80px;font:7.5px/9.0px 'Liberation Sans', sans-serif;color:#454545;transform:scaleX(0.9586)">Puede ordenar una lista de archivos en Google Drive de cuatro formas:</span>
<span id="t59" class="t" style="left:288.6px;top:184.90px;font:7.5px/9.0px 'Liberation Sans', sans-serif;color:#454545;transform:scaleX(0.9522)">Nombre: ordena los archivos alfabéticamente por nombre.</span>
<span id="t60" class="t" style="left:288.6px;top:193.30px;font:7.5px/9.0px 'Liberation Sans', sans-serif;color:#454545;transform:scaleX(0.9502)">Última modificación: ordena los archivos por el último que cambió un usuario.</span>
<span id="t61" class="t" style="left:288.6px;top:201.90px;font:7.5px/9.0px 'Liberation Sans', sans-serif;color:#454545;transform:scaleX(0.9538)">Última modificación mía: ordena los archivos por el último que cambiaste.</span>
<span id="t62" class="t" style="left:288.6px;top:210.70px;font:7.5px/9.0px 'Liberation Sans', sans-serif;color:#454545;transform:scaleX(0.9543)">Últimos abiertos por mí: ordena los archivos por el último que abriste.</span>
<span id="t63" class="t" style="left:264px;top:229.10px;font:7.5px/9.0px 'Liberation Sans', sans-serif;color:#454545;font-style:italic;text-decoration:underline;text-decoration-thickness:.6px;transform:scaleX(0.9555)">Nota: No podrá ordenar los archivos de la pestaña &quot;Reciente&quot;.</span>
<span id="t64" class="t" style="left:264px;top:247.84px;font:8.6px/10.32px 'Liberation Sans', sans-serif;color:#111;font-weight:bold;transform:scaleX(0.9520)">Reordenar archivos y carpetas</span>
<span id="t65" class="t" style="left:288.6px;top:267.40px;font:7.5px/9.0px 'Liberation Sans', sans-serif;color:#454545;text-decoration:underline;text-decoration-thickness:.6px;transform:scaleX(0.9577)">Hay dos formas de ver los archivos y las carpetas de Google Drive.</span>
<span id="t66" class="t" style="left:289px;top:331.90px;font:8px/9.6px 'DejaVu Serif', 'Liberation Serif', serif;color:#c22a35;font-weight:bold;font-style:italic;transform:scaleX(0.8789)">clic en Vista de</span>
<span id="t67" class="t" style="left:289px;top:340.00px;font:8px/9.6px 'DejaVu Serif', 'Liberation Serif', serif;color:#c22a35;font-weight:bold;font-style:italic;transform:scaleX(0.8782)">lista o vista de</span>
<span id="t68" class="t" style="left:289px;top:348.20px;font:8px/9.6px 'DejaVu Serif', 'Liberation Serif', serif;color:#c22a35;font-weight:bold;font-style:italic;transform:scaleX(0.8396)">cuadrícula</span>
<span id="t69" class="t" style="left:342.2px;top:326.68px;font:4.2px/5.04px 'Liberation Sans', sans-serif;color:#fff;font-weight:bold;transform:scaleX(0.9557)">Vista de lista</span>
<span id="t70" class="t" style="left:167.1px;top:51.80px;font:10px/12.0px 'Liberation Sans', sans-serif;color:#555;transform:scaleX(0.9293)">A</span>
<span id="t71" class="t" style="left:173.5px;top:53.44px;font:3.6px/4.32px 'Liberation Sans', sans-serif;color:#555;transform:scaleX(1.0667)">^</span>
<span id="t72" class="t" style="left:179.7px;top:53.68px;font:8.2px/9.84px 'Liberation Sans', sans-serif;color:#555;transform:scaleX(0.9143)">A</span>
<span id="t73" class="t" style="left:184.5px;top:54.04px;font:4.6px/5.52px 'Liberation Sans', sans-serif;color:#555;transform:scaleX(1.1755)">ˇ</span>
<span id="t74" class="t" style="left:194.29999999999998px;top:53.80px;font:8px/9.6px 'Liberation Sans', sans-serif;color:#555;transform:scaleX(0.8778)">Aa</span>
<span id="t75" class="t" style="left:217.2px;top:51.96px;font:9.4px/11.28px 'Liberation Sans', sans-serif;color:#555;transform:scaleX(0.8938)">A</span>
<span id="t76" class="t" style="left:92.5px;top:70.20px;font:8px/9.6px 'Liberation Sans', sans-serif;color:#222;font-weight:bold;transform:scaleX(0.9686)">N</span>
<span id="t77" class="t" style="left:104.8px;top:70.56px;font:7.4px/8.88px 'Liberation Sans', sans-serif;color:#444;font-style:italic;transform:scaleX(0.8911)">K</span>
<span id="t78" class="t" style="left:116.6px;top:70.72px;font:6.8px/8.16px 'Liberation Sans', sans-serif;color:#444;text-decoration:underline;text-decoration-thickness:.5px;transform:scaleX(0.8797)">S</span>
<span id="t79" class="t" style="left:133.7px;top:71.72px;font:5.8px/6.96px 'Liberation Sans', sans-serif;color:#666;text-decoration:line-through;text-decoration-thickness:.5px;transform:scaleX(0.8334)">abc</span>
<span id="t80" class="t" style="left:146.9px;top:70.40px;font:8px/9.6px 'Liberation Sans', sans-serif;color:#333;transform:scaleX(0.9500)">x</span>
<span id="t81" class="t" style="left:151.1px;top:75.84px;font:3.6px/4.32px 'Liberation Sans', sans-serif;color:#5f8fc8;transform:scaleX(0.9000)">2</span>
<span id="t82" class="t" style="left:157.9px;top:70.60px;font:8px/9.6px 'Liberation Sans', sans-serif;color:#333;transform:scaleX(0.9500)">x</span>
<span id="t83" class="t" style="left:162.1px;top:69.84px;font:3.6px/4.32px 'Liberation Sans', sans-serif;color:#5f8fc8;transform:scaleX(0.9000)">2</span>
<span id="t84" class="t" style="left:171.7px;top:68.70px;font:10.5px/12.6px 'Liberation Sans', sans-serif;color:#4f94dc;font-weight:bold;text-shadow:0 0 1px #9cc4ee;transform:scaleX(1.0272)">A</span>
<span id="t85" class="t" style="left:210.9px;top:68.76px;font:8.4px/10.08px 'Liberation Sans', sans-serif;color:#444;transform:scaleX(0.9654)">A</span>
<span id="t86" class="t" style="left:324.5px;top:52.64px;font:5.6px/6.72px 'Liberation Sans', sans-serif;color:#3f7fc4;transform:scaleX(0.9105)">A</span>
<span id="t87" class="t" style="left:324.59999999999997px;top:58.04px;font:5.6px/6.72px 'Liberation Sans', sans-serif;color:#444;transform:scaleX(0.9352)">Z</span>
<span id="t88" class="t" style="left:342.3px;top:53.24px;font:8.6px/10.32px 'Liberation Sans', sans-serif;color:#333;font-weight:bold;transform:scaleX(1.0458)">¶</span>
<span id="t89" class="t" style="left:294.5px;top:293.94px;font:5.6px/6.72px 'Liberation Sans', sans-serif;color:#555;font-weight:bold;transform:scaleX(0.9352)">?</span>
</div>
</body></html>
